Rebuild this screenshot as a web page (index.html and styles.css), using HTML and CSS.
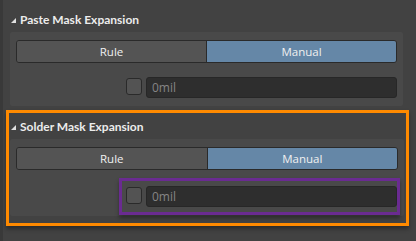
FILE: index.html
```html
<!DOCTYPE html>
<html>
<head>
    <meta charset="utf-8">
    <title>Mask Expansion</title>
    <link rel="stylesheet" href="styles.css">
</head>
<body>
<div class="props">
    <div class="section">
        <div class="section-head"><span class="caret"></span>Paste Mask Expansion</div>
        <div class="group">
            <div class="toggle">
                <div class="toggle-btn">Rule</div>
                <div class="toggle-btn active">Manual</div>
            </div>
            <div class="value-row">
                <div class="check"></div>
                <div class="field">0mil</div>
            </div>
        </div>
    </div>

    <div class="section highlight">
        <div class="section-head"><span class="caret"></span>Solder Mask Expansion</div>
        <div class="group">
            <div class="toggle">
                <div class="toggle-btn">Rule</div>
                <div class="toggle-btn active">Manual</div>
            </div>
            <div class="value-row marked">
                <div class="check"></div>
                <div class="field">0mil</div>
            </div>
        </div>
    </div>
</div>
</body>
</html>
```

FILE: styles.css
```css
html, body {
    margin: 0;
    height: 100%;
}

body {
    background-color: #424242;
    border-left: 3px solid #393939;
    font-family: "Open Sans", "Noto Sans", sans-serif;
    color: #e8e8e8;
    overflow: hidden;
}

.props {
    padding-top: 6px;
}

.section-head {
    height: 26px;
    display: flex;
    align-items: center;
    padding-left: 8px;
    font-family: Lato, "Open Sans", sans-serif;
    font-size: 12px;
    font-weight: bold;
    color: #ececec;
}

.caret {
    width: 0;
    height: 0;
    border-left: 5px solid transparent;
    border-bottom: 5px solid #e0e0e0;
    margin-right: 4px;
    margin-top: 2px;
}

.group {
    margin: 0 13px 0 7px;
    padding: 8px 6px;
    background-color: #494949;
    border-radius: 2px;
}

.toggle {
    display: flex;
    height: 23px;
    border: 1px solid #2a2a2a;
    border-radius: 3px;
    box-sizing: border-box;
    overflow: hidden;
}

.toggle-btn {
    flex: 1;
    display: flex;
    align-items: center;
    justify-content: center;
    background-color: #545454;
    font-size: 11.5px;
    color: #f0f0f0;
}

.toggle-btn + .toggle-btn {
    border-left: 1px solid #2a2a2a;
}

.toggle-btn.active {
    background-color: #6587a7;
}

.value-row {
    display: flex;
    gap: 4px;
    margin-top: 14px;
    margin-left: 110px;
}

.check {
    width: 16px;
    height: 17px;
    box-sizing: border-box;
    background-color: #535353;
    border: 1px solid #2a2a2a;
    border-radius: 3px;
    margin-top: 1px;
}

.field {
    flex: 1;
    height: 21px;
    box-sizing: border-box;
    background-color: #2e2e2e;
    border: 1px solid #272727;
    border-radius: 3px;
    padding-left: 5px;
    font-size: 12px;
    line-height: 19px;
    color: #858585;
}

/* annotation boxes */
.highlight {
    margin: 4px 7px 0 3px;
    border: 3px solid #ff8a00;
    padding-bottom: 7px;
    box-shadow: 0 3px 4px rgba(0, 0, 0, 0.35);
}

.highlight .section-head {
    padding-left: 2px;
}

.highlight .group {
    margin: 0 2px 0 1px;
    padding-bottom: 1px;
}

.marked {
    margin: 8px -2px 0 103px;
    padding: 5px 0 5px 4px;
    border: 3px solid #6a2b91;
    box-shadow: 0 3px 4px rgba(0, 0, 0, 0.35);
}
```
